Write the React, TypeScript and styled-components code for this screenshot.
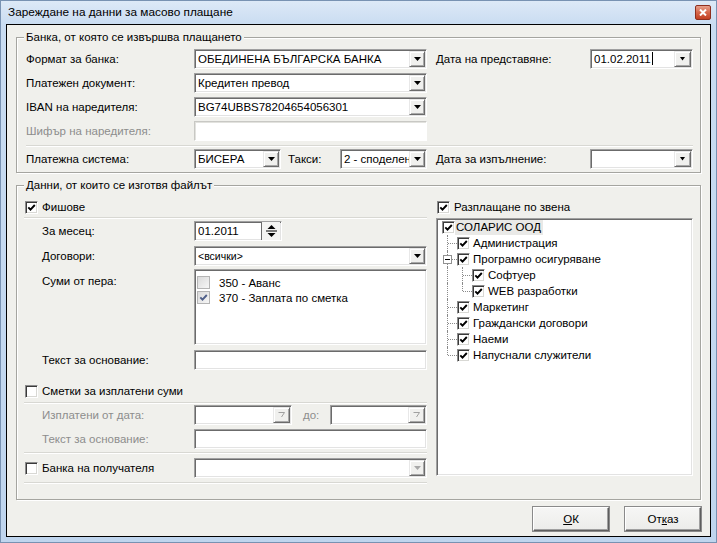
import React from "react";
import styled, { createGlobalStyle } from "styled-components";

const GlobalStyle = createGlobalStyle`
  html, body { margin: 0; padding: 0; background: #c6daf0; }
  body {
    font-family: "Liberation Sans", Arial, sans-serif;
    font-size: 11.5px;
    color: #000;
  }
  * { box-sizing: border-box; }
`;

const FACE = "#f0f0ec";

const Frame = styled.div`
  width: 717px;
  height: 543px;
  display: flex;
  flex-direction: column;
  padding: 0 5px 5px 5px;
  border: 1px solid #7892b2;
  background: linear-gradient(180deg, #dde9f7 0px, #c9dcf1 24px, #bfd5ee 100%);
`;

const TitleBar = styled.div`
  height: 23px;
  flex: none;
  display: flex;
  align-items: flex-start;
  padding-left: 2px;
`;

const Title = styled.span`
  font-size: 11.8px;
  line-height: 23px;
  color: #000;
`;

const CloseBtn = styled.span`
  margin: 4px 0 0 auto;
  width: 16px;
  height: 15px;
  border: 1px solid #8e2f1f;
  border-radius: 2px;
  background: linear-gradient(180deg, #e6a08c 0%, #d6664a 50%, #c23f22 100%);
  display: flex;
  align-items: center;
  justify-content: center;
`;

const Client = styled.div`
  flex: 1;
  display: flex;
  flex-direction: column;
  border: 1px solid #000;
  background: ${FACE};
  padding: 12px 9px 0 9px;
`;

const Group = styled.div<{ $mt?: number }>`
  position: relative;
  margin-top: ${({ $mt }) => $mt ?? 0}px;
  border: 1px solid #a5a5a0;
  box-shadow: inset 1px 1px 0 #fff, 1px 1px 0 #fff;
`;

const Legend = styled.span`
  position: absolute;
  top: -8px;
  left: 7px;
  padding: 0 2px;
  line-height: 14px;
  background: ${FACE};
`;

const BankBody = styled.div`
  padding: 11px 0 3px 9px;
  display: flex;
  flex-direction: column;
`;

const Row = styled.div<{ $mt?: number; $h?: number; $top?: boolean }>`
  display: flex;
  align-items: ${({ $top }) => ($top ? "flex-start" : "center")};
  height: ${({ $h }) => $h ?? 20}px;
  margin-top: ${({ $mt }) => $mt ?? 0}px;
  flex: none;
`;

const Label = styled.span<{ $w?: number; $muted?: boolean; $mt?: number }>`
  width: ${({ $w }) => ($w ? `${$w}px` : "auto")};
  flex: none;
  white-space: nowrap;
  line-height: 14px;
  margin-top: ${({ $mt }) => $mt ?? 0}px;
  color: ${({ $muted }) => ($muted ? "#8d8d8d" : "#000")};
`;

const Gap = styled.span<{ $w: number }>`
  width: ${({ $w }) => $w}px;
  flex: none;
`;

const Separator = styled.div<{ $mt?: number; $w?: number }>`
  margin-top: ${({ $mt }) => $mt ?? 0}px;
  width: ${({ $w }) => ($w ? `${$w}px` : "100%")};
  height: 2px;
  flex: none;
  border-top: 1px solid #d8d8d3;
  border-bottom: 1px solid #fff;
`;

const Field = styled.div<{ $w: number; $h?: number; $soft?: boolean }>`
  width: ${({ $w }) => $w}px;
  height: ${({ $h }) => $h ?? 20}px;
  flex: none;
  display: flex;
  align-items: center;
  overflow: hidden;
  background: #fff;
  padding: 0 1px 0 3px;
  border: 1px solid;
  border-color: ${({ $soft }) => ($soft ? "#c8c8c4 #fff #fff #c8c8c4" : "#a0a0a0 #fff #fff #a0a0a0")};
  box-shadow: ${({ $soft }) =>
    $soft ? "inset 1px 1px 0 #e2e2de" : "inset 1px 1px 0 #6b6b6b, inset -1px -1px 0 #e3e3e3"};
`;

const FieldText = styled.span<{ $small?: boolean }>`
  flex: 1;
  min-width: 0;
  white-space: nowrap;
  overflow: hidden;
  line-height: 14px;
  font-size: ${({ $small }) => ($small ? "10.5px" : "11.5px")};
`;

const Caret = styled.span`
  display: inline-block;
  width: 1px;
  height: 13px;
  margin-left: 1px;
  vertical-align: -2px;
  background: #000;
`;

const DropBtn = styled.span<{ $w?: number }>`
  width: ${({ $w }) => $w ?? 16}px;
  height: 16px;
  flex: none;
  margin-left: auto;
  display: flex;
  align-items: center;
  justify-content: center;
  background: #f0f0ee;
  border: 1px solid;
  border-color: #e8e8e8 #6b6b6b #6b6b6b #e8e8e8;
  box-shadow: inset 1px 1px 0 #fff, inset -1px -1px 0 #a8a8a8;
`;

const Arrow = ({ muted, small, hollow }: { muted?: boolean; small?: boolean; hollow?: boolean }) =>
  hollow ? (
    <svg width="7" height="6" viewBox="0 0 7 6">
      <polyline points="0.5,0.5 6.5,0.5 3.5,5" fill="none" stroke="#a0a0a0" strokeWidth="1" />
    </svg>
  ) : small ? (
    <svg width="5" height="4" viewBox="0 0 5 4">
      <polygon points="0,0 5,0 2.5,3.5" fill={muted ? "#a8a8a8" : "#000"} />
    </svg>
  ) : (
    <svg width="7" height="4" viewBox="0 0 7 4">
      <polygon points="0,0 7,0 3.5,4" fill={muted ? "#a8a8a8" : "#000"} />
    </svg>
  );

const SpinBtn = styled.span`
  width: 19px;
  height: 18px;
  flex: none;
  margin-left: auto;
  display: flex;
  align-items: center;
  justify-content: center;
  border-left: 1px solid #6b6b6b;
  background: #f4f4f2;
`;

const List = styled(Field)`
  flex-direction: column;
  align-items: stretch;
  padding: 4px 2px;
`;

const ListItem = styled.div`
  display: flex;
  align-items: center;
  gap: 9px;
  height: 17px;
  flex: none;
  margin-top: -2px;
  &:first-child { margin-top: 0; }
`;

const Box = styled.span<{ $muted?: boolean }>`
  width: 13px;
  height: 13px;
  flex: none;
  display: inline-flex;
  align-items: center;
  justify-content: center;
  border: 1px solid;
  ${({ $muted }) =>
    $muted
      ? `border-color: #b4b4b4; background: linear-gradient(135deg, #dadada 0%, #f6f6f6 100%);`
      : `border-color: #8c8c8c #fff #fff #8c8c8c; background: #fff;
         box-shadow: inset 1px 1px 0 #3a3a3a, inset -1px -1px 0 #d8d8d4;`}
`;

const Check = ({ checked, muted }: { checked?: boolean; muted?: boolean }) => (
  <Box $muted={muted}>
    {checked && (
      <svg width="9" height="9" viewBox="0 0 9 9">
        <polyline
          points="1.3,4.3 3.5,6.6 7.8,2"
          fill="none"
          stroke={muted ? "#50608a" : "#000"}
          strokeWidth="1.9"
        />
      </svg>
    )}
  </Box>
);

const CheckRow = styled.div<{ $mt?: number; $indent?: number }>`
  display: flex;
  align-items: center;
  gap: 4px;
  height: 16px;
  flex: none;
  margin-top: ${({ $mt }) => $mt ?? 0}px;
  padding-left: ${({ $indent }) => $indent ?? 1}px;
`;

const DataBody = styled.div`
  display: flex;
  gap: 9px;
  padding: 13px 7px 15px 7px;
`;

const LeftCol = styled.div`
  width: 403px;
  flex: none;
  display: flex;
  flex-direction: column;
`;

const SubRows = styled.div`
  padding-left: 18px;
  display: flex;
  flex-direction: column;
`;

const RightCol = styled.div`
  flex: 1;
  display: flex;
  flex-direction: column;
`;

const TreeBox = styled.div`
  margin-top: 3px;
  height: 258px;
  background: #fff;
  border: 1px solid;
  border-color: #a0a0a0 #fff #fff #a0a0a0;
  box-shadow: inset 1px 1px 0 #6b6b6b, inset -1px -1px 0 #e3e3e3;
  padding: 0 0 0 5px;
  display: flex;
  flex-direction: column;
`;

const TreeRow = styled.div`
  display: flex;
  align-items: center;
  height: 16px;
  flex: none;
`;

const TreeText = styled.span<{ $selected?: boolean }>`
  margin-left: ${({ $selected }) => ($selected ? 0 : 2)}px;
  padding: 0 2px 0 1px;
  line-height: 15px;
  white-space: nowrap;
  background: ${({ $selected }) => ($selected ? "#e9e9e7" : "transparent")};
`;

type GuideKind = "line" | "branch" | "last";

const Guide = styled.span<{ $kind: GuideKind }>`
  position: relative;
  width: 15px;
  height: 16px;
  flex: none;
  &::before {
    content: "";
    position: absolute;
    left: 5px;
    top: 0;
    height: ${({ $kind }) => ($kind === "last" ? 8 : 16)}px;
    border-left: 1px dotted #8a8a8a;
  }
  &::after {
    content: "";
    position: absolute;
    left: 6px;
    top: 8px;
    width: 9px;
    border-top: 1px dotted #8a8a8a;
    display: ${({ $kind }) => ($kind === "line" ? "none" : "block")};
  }
`;

const Expander = styled.span`
  position: absolute;
  z-index: 1;
  left: 1px;
  top: 4px;
  width: 9px;
  height: 9px;
  border: 1px solid #919191;
  background: #fff;
  display: flex;
  align-items: center;
  justify-content: center;
  &::before {
    content: "";
    width: 5px;
    height: 1px;
    background: #000;
  }
`;

const Buttons = styled.div`
  margin-top: 7px;
  display: flex;
  justify-content: flex-end;
  gap: 16px;
`;

const Button = styled.button`
  width: 76px;
  height: 24px;
  font-family: inherit;
  font-size: 11.5px;
  color: #000;
  background: linear-gradient(180deg, #f6f6f5 0%, #ececea 100%);
  border: 1px solid;
  border-color: #fff #5e5e5e #5e5e5e #fff;
  box-shadow: inset -1px -1px 0 #a0a0a0, 0 0 0 1px #8a8a8a;
  padding: 0;
  u { text-decoration: underline; }
`;

const Combo = ({ w, text, small, muted }: { w: number; text?: string; small?: boolean; muted?: boolean }) => (
  <Field $w={w}>
    <FieldText $small={small}>{text}</FieldText>
    <DropBtn>
      <Arrow muted={muted} />
    </DropBtn>
  </Field>
);

const DateBox = ({ w, children, hollow }: { w: number; children?: React.ReactNode; hollow?: boolean }) => (
  <Field $w={w}>
    <FieldText>{children}</FieldText>
    <DropBtn $w={17}>{hollow ? <Arrow hollow /> : <Arrow small />}</DropBtn>
  </Field>
);

const tree: { label: string; guides: GuideKind[]; expander?: boolean }[] = [
  { label: "Администрация", guides: ["branch"] },
  { label: "Програмно осигуряване", guides: ["branch"], expander: true },
  { label: "Софтуер", guides: ["line", "branch"] },
  { label: "WEB разработки", guides: ["line", "last"] },
  { label: "Маркетинг", guides: ["branch"] },
  { label: "Граждански договори", guides: ["branch"] },
  { label: "Наеми", guides: ["branch"] },
  { label: "Напуснали служители", guides: ["last"] },
];

export default function App() {
  return (
    <>
      <GlobalStyle />
      <Frame>
        <TitleBar>
          <Title>Зареждане на данни за масово плащане</Title>
          <CloseBtn>
            <svg width="8" height="7" viewBox="0 0 8 7">
              <path d="M1 0.5 L7 6.5 M7 0.5 L1 6.5" stroke="#fff" strokeWidth="2" />
            </svg>
          </CloseBtn>
        </TitleBar>
        <Client>
          <Group>
            <Legend>Банка, от която се извършва плащането</Legend>
            <BankBody>
              <Row>
                <Label $w={168}>Формат за банка:</Label>
                <Combo w={233} text="ОБЕДИНЕНА БЪЛГАРСКА БАНКА" />
                <Gap $w={9} />
                <Label $w={154}>Дата на представяне:</Label>
                <DateBox w={103}>
                  01.02.2011
                  <Caret />
                </DateBox>
              </Row>
              <Row $mt={4}>
                <Label $w={168}>Платежен документ:</Label>
                <Combo w={233} text="Кредитен превод" />
              </Row>
              <Row $mt={4}>
                <Label $w={168}>IBAN на наредителя:</Label>
                <Combo w={233} text="BG74UBBS78204654056301" />
              </Row>
              <Row $mt={4}>
                <Label $w={168} $muted>
                  Шифър на наредителя:
                </Label>
                <Field $w={233} $soft />
              </Row>
              <Separator $mt={4} $w={667} />
              <Row $mt={2}>
                <Label $w={168}>Платежна система:</Label>
                <Combo w={87} text="БИСЕРА" />
                <Gap $w={7} />
                <Label $w={52}>Такси:</Label>
                <Combo w={87} text="2 - споделен" />
                <Gap $w={9} />
                <Label $w={154}>Дата за изпълнение:</Label>
                <DateBox w={103} />
              </Row>
            </BankBody>
          </Group>

          <Group $mt={12}>
            <Legend>Данни, от които се изготвя файлът</Legend>
            <DataBody>
              <LeftCol>
                <CheckRow>
                  <Check checked />
                  <Label>Фишове</Label>
                </CheckRow>
                <Separator $mt={2} />
                <SubRows>
                  <Row $mt={2}>
                    <Label $w={152}>За месец:</Label>
                    <Field $w={88}>
                      <FieldText>01.2011</FieldText>
                      <SpinBtn>
                        <svg width="15" height="14" viewBox="0 0 15 14">
                          <polygon points="3.5,5 11.5,5 7.5,1" fill="#000" />
                          <rect x="2" y="6.5" width="11" height="1" fill="#000" />
                          <polygon points="3.5,9 11.5,9 7.5,13" fill="#000" />
                        </svg>
                      </SpinBtn>
                    </Field>
                  </Row>
                  <Row $mt={5}>
                    <Label $w={152}>Договори:</Label>
                    <Combo w={233} text="<всички>" small />
                  </Row>
                  <Row $mt={3} $h={76} $top>
                    <Label $w={152} $mt={5}>
                      Суми от пера:
                    </Label>
                    <List $w={233} $h={76}>
                      <ListItem>
                        <Check muted />
                        <span>350 - Аванс</span>
                      </ListItem>
                      <ListItem>
                        <Check muted checked />
                        <span>370 - Заплата по сметка</span>
                      </ListItem>
                    </List>
                  </Row>
                  <Row $mt={5}>
                    <Label $w={152}>Текст за основание:</Label>
                    <Field $w={233} />
                  </Row>
                </SubRows>
                <CheckRow $mt={13}>
                  <Check />
                  <Label>Сметки за изплатени суми</Label>
                </CheckRow>
                <Separator $mt={3} />
                <SubRows>
                  <Row $mt={1}>
                    <Label $w={152} $muted>
                      Изплатени от дата:
                    </Label>
                    <DateBox w={98} hollow />
                    <Gap $w={11} />
                    <Label $w={27} $muted>
                      до:
                    </Label>
                    <DateBox w={97} hollow />
                  </Row>
                  <Row $mt={4}>
                    <Label $w={152} $muted>
                      Текст за основание:
                    </Label>
                    <Field $w={233} />
                  </Row>
                </SubRows>
                <Separator $mt={3} />
                <Row $mt={4}>
                  <CheckRow>
                    <Check />
                    <Label $w={152}>Банка на получателя</Label>
                  </CheckRow>
                  <Combo w={233} muted />
                </Row>
                <Separator $mt={4} />
              </LeftCol>

              <RightCol>
                <CheckRow>
                  <Check checked />
                  <Label>Разплащане по звена</Label>
                </CheckRow>
                <TreeBox>
                  <TreeRow>
                    <Check checked />
                    <TreeText $selected>СОЛАРИС ООД</TreeText>
                  </TreeRow>
                  {tree.map((node) => (
                    <TreeRow key={node.label}>
                      {node.guides.map((g, i) => (
                        <Guide key={i} $kind={g}>
                          {node.expander && <Expander />}
                        </Guide>
                      ))}
                      <Check checked />
                      <TreeText>{node.label}</TreeText>
                    </TreeRow>
                  ))}
                </TreeBox>
              </RightCol>
            </DataBody>
          </Group>

          <Buttons>
            <Button>
              <u>О</u>К
            </Button>
            <Button>
              От<u>к</u>аз
            </Button>
          </Buttons>
        </Client>
      </Frame>
    </>
  );
}
